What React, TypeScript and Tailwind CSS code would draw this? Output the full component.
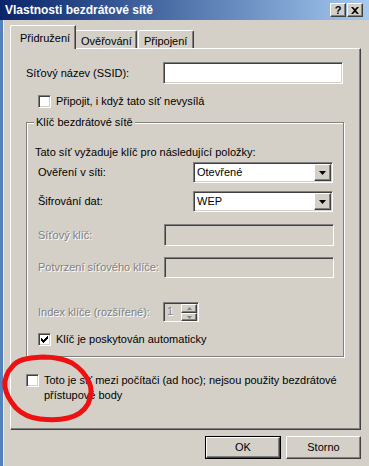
import React from "react";

const sunken =
  "border border-t-[#808080] border-l-[#808080] border-b-white border-r-white shadow-[inset_1px_1px_0_#404040,inset_-1px_-1px_0_#d4d0c8]";
const raised =
  "border border-t-white border-l-white border-b-[#404040] border-r-[#404040] shadow-[inset_-1px_-1px_0_#808080,inset_1px_1px_0_#d4d0c8]";
const disabledText = "text-[#808080] [text-shadow:1px_1px_0_#ffffff]";

function CheckBox({ checked }: { checked?: boolean }) {
  return (
    <div className={`w-[13px] h-[13px] shrink-0 bg-white flex items-center justify-center ${sunken}`}>
      {checked && (
        <svg width="7" height="7" viewBox="0 0 7 7">
          <path d="M0 2h1v1h1v1h1V3h1V2h1V1h1V0h1v3H6v1H5v1H4v1H3v1H2V6H1V5H0z" fill="#000" />
        </svg>
      )}
    </div>
  );
}

function Combo({ value }: { value: string }) {
  return (
    <div className={`w-[140px] h-[21px] bg-white flex items-center ${sunken}`}>
      <span className="flex-1 pl-[3px] leading-[13px]">{value}</span>
      <div className={`w-[17px] h-[17px] mr-px bg-[#d4d0c8] flex items-center justify-center ${raised}`}>
        <svg width="7" height="4" viewBox="0 0 7 4">
          <path d="M0 0h7L3.5 4z" fill="#000" />
        </svg>
      </div>
    </div>
  );
}

function Button({ label, isDefault }: { label: string; isDefault?: boolean }) {
  const inner = (
    <div className={`w-[75px] h-[23px] flex items-center justify-center bg-[#d4d0c8] ${raised}`}>
      {label}
    </div>
  );
  if (!isDefault) return inner;
  return <div className="border border-black">{/* default button frame */}<div className={`w-[74px] h-[21px] flex items-center justify-center bg-[#d4d0c8] ${raised}`}>{label}</div></div>;
}

function CaptionButton({ children }: { children: React.ReactNode }) {
  return (
    <div className={`w-[16px] h-[14px] bg-[#d4d0c8] flex items-center justify-center ${raised}`}>
      {children}
    </div>
  );
}

export default function App() {
  return (
    <div className="relative w-[369px] h-[466px] overflow-hidden bg-[#d4d0c8] flex flex-col font-['Liberation_Sans',Arial,sans-serif] text-[11px] text-black">
      {/* title bar */}
      <div className="h-[20px] shrink-0 flex items-center bg-gradient-to-r from-[#0a246a] to-[#a6caf0] pl-[5px] pr-[6px]">
        <span className="flex-1 text-white font-bold text-[12px] leading-[14px]">Vlastnosti bezdrátové sítě</span>
        <div className="flex gap-[0px]">
          <CaptionButton>
            <span className="font-bold text-[11px] leading-[10px]">?</span>
          </CaptionButton>
          <div className="w-px" />
          <CaptionButton>
            <svg width="8" height="7" viewBox="0 0 8 7">
              <path d="M0 0h2l2 2 2-2h2L5 3.5 8 7H6L4 5 2 7H0l3-3.5z" fill="#000" />
            </svg>
          </CaptionButton>
        </div>
      </div>

      <div className="flex flex-1">
        <div className="w-[3px] bg-[#5281bd]" />
        <div className="w-px bg-[#eeeeee]" />
        <div className="flex-1 flex flex-col pl-[6px]">
          {/* tabs */}
          <div className="mt-[5px] h-[23px] flex items-end">
            <div className="relative z-10 w-[66px] h-[24px] -mb-px bg-[#d4d0c8] border-l border-t border-white rounded-tl-[2px] border-r border-r-[#404040] shadow-[inset_-1px_0_0_#808080] pl-[9px] pt-[6px] leading-[13px]">
              Přidružení
            </div>
            <div className="w-[61px] h-[18px] border-t border-white border-r border-r-[#404040] shadow-[inset_-1px_0_0_#808080] rounded-tr-[2px] pl-[5px] pt-[4px] leading-[13px]">
              Ověřování
            </div>
            <div className="w-[56px] h-[18px] ml-px border-t border-l border-white border-r border-r-[#404040] shadow-[inset_-1px_0_0_#808080] rounded-t-[2px] pl-[5px] pt-[4px] leading-[13px]">
              Připojení
            </div>
          </div>

          {/* panel */}
          <div className="w-[351px] h-[382px] border-l border-t border-white border-r border-b border-r-[#404040] border-b-[#404040] shadow-[inset_-1px_-1px_0_#808080] flex flex-col pl-[15px]">
            <div className="mt-[13px] flex items-center h-[22px]">
              <span className="w-[137px] leading-[13px]">Síťový název (SSID):</span>
              <div className={`w-[180px] h-[22px] bg-white ${sunken}`} />
            </div>

            <div className="mt-[11px] ml-[12px] flex items-center gap-[5px] leading-[13px]">
              <CheckBox />
              <span>Připojit, i když tato síť nevysílá</span>
            </div>

            <fieldset className="mt-[8px] w-[318px] border border-[#808080] shadow-[inset_1px_1px_0_#ffffff,1px_1px_0_#ffffff] pb-[10px] flex flex-col">
              <legend className="ml-[7px] px-[2px] bg-[#d4d0c8] leading-[13px]">Klíč bezdrátové sítě</legend>

              <div className="mt-[17px] pl-[8px] leading-[13px]">Tato síť vyžaduje klíč pro následující položky:</div>

              <div className="mt-[3px] pl-[11px] flex items-center">
                <span className="w-[155px] leading-[13px]">Ověření v síti:</span>
                <Combo value="Otevřené" />
              </div>
              <div className="mt-[8px] pl-[11px] flex items-center">
                <span className="w-[155px] leading-[13px]">Šifrování dat:</span>
                <Combo value="WEP" />
              </div>

              <div className="mt-[12px] pl-[11px] flex items-center">
                <span className={`w-[126px] leading-[13px] ${disabledText}`}>Síťový klíč:</span>
                <div className={`w-[170px] h-[22px] bg-[#d4d0c8] ${sunken}`} />
              </div>
              <div className="mt-[11px] pl-[11px] flex items-center">
                <span className={`w-[126px] leading-[13px] ${disabledText}`}>Potvrzení síťového klíče:</span>
                <div className={`w-[170px] h-[21px] bg-[#d4d0c8] ${sunken}`} />
              </div>

              <div className="mt-[24px] pl-[11px] flex items-center">
                <span className={`w-[125px] leading-[13px] ${disabledText}`}>Index klíče (rozšířené):</span>
                <div className={`w-[36px] h-[20px] bg-[#d4d0c8] flex ${sunken}`}>
                  <span className={`flex-1 pl-[3px] leading-[17px] ${disabledText}`}>1</span>
                  <div className="flex flex-col w-[16px] mr-px mt-px">
                    <div className={`h-[9px] flex items-center justify-center ${raised}`}>
                      <svg width="5" height="3" viewBox="0 0 5 3">
                        <path d="M0 3h5L2.5 0z" fill="#808080" />
                      </svg>
                    </div>
                    <div className={`h-[8px] flex items-center justify-center ${raised}`}>
                      <svg width="5" height="3" viewBox="0 0 5 3">
                        <path d="M0 0h5L2.5 3z" fill="#808080" />
                      </svg>
                    </div>
                  </div>
                </div>
              </div>

              <div className="mt-[11px] pl-[11px] flex items-center gap-[5px] leading-[13px]">
                <CheckBox checked />
                <span>Klíč je poskytován automaticky</span>
              </div>
            </fieldset>

            <div className="mt-[16px] flex items-start gap-[5px]">
              <div className="mt-px">
                <CheckBox />
              </div>
              <span className="leading-[15px]">
                Toto je síť mezi počítači (ad hoc); nejsou použity bezdrátové
                <br />
                přístupové body
              </span>
            </div>
          </div>

          {/* buttons */}
          <div className="mt-[6px] flex justify-end gap-[5px] pr-[8px]">
            <Button label="OK" isDefault />
            <Button label="Storno" />
          </div>
        </div>
      </div>

      {/* red hand-drawn annotation */}
      <svg className="absolute left-0 top-[350px] pointer-events-none" width="110" height="75" viewBox="0 0 110 75">
        <path
          d="M12 17C17 10 25 8 43 7C55 7 64 9 72 13C80 18 86 25 89 32C92 38 92 45 88 54C84 61 77 66 68 68C60 70 50 70 40 69C31 68 22 64 16 58C10 51 6 44 5 37C4 30 7 22 12 17"
          fill="none"
          stroke="#ee1111"
          strokeWidth="5"
          strokeLinecap="round"
          strokeLinejoin="round"
        />
      </svg>
    </div>
  );
}
